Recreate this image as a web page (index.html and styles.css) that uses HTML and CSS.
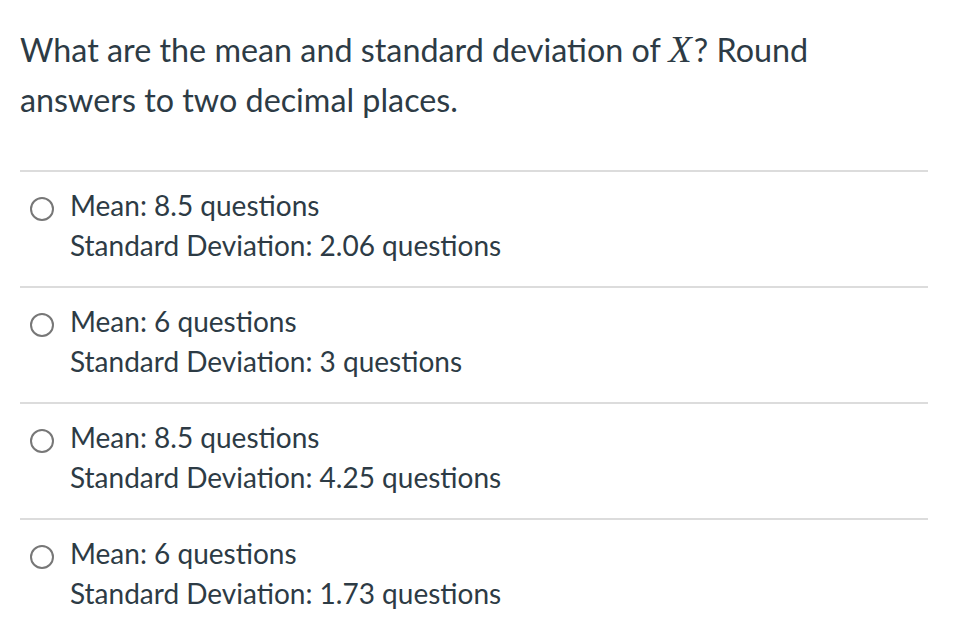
FILE: index.html
```html
<!DOCTYPE html>
<html>
<head>
<meta charset="utf-8">
<link rel="stylesheet" href="styles.css">
</head>
<body>
<div class="quiz">
  <div class="question">What are the mean and standard deviation of <span class="math">X</span>? Round answers to two decimal places.</div>
  <div class="answers">
    <div class="answer">
      <span class="radio"></span>
      <div class="label">Mean: 8.5 questions<br>Standard Deviation: 2.06 questions</div>
    </div>
    <div class="answer">
      <span class="radio"></span>
      <div class="label">Mean: 6 questions<br>Standard Deviation: 3 questions</div>
    </div>
    <div class="answer">
      <span class="radio"></span>
      <div class="label">Mean: 8.5 questions<br>Standard Deviation: 4.25 questions</div>
    </div>
    <div class="answer">
      <span class="radio"></span>
      <div class="label">Mean: 6 questions<br>Standard Deviation: 1.73 questions</div>
    </div>
  </div>
</div>
</body>
</html>
```
FILE: styles.css
```css
html, body {
  margin: 0;
  padding: 0;
  background: #fff;
}
body {
  font-family: Lato, "Liberation Sans", sans-serif;
  color: #2d3b45;
}
.quiz {
  padding: 25px 26px 0 20px;
}
.question {
  font-size: 32.3px;
  line-height: 50px;
  width: 850px;
}
.math {
  font-family: "Liberation Serif", "Times New Roman", serif;
  font-style: italic;
  font-size: 38px;
  line-height: 1;
  margin-right: 2px;
}
.answers {
  margin-top: 45px;
}
.answer {
  border-top: 2px solid #dcdcdc;
  display: flex;
  align-items: flex-start;
  padding: 13px 0 21px 0;
}
.radio {
  width: 20px;
  height: 20px;
  border: 2px solid #777;
  border-radius: 50%;
  margin: 12px 0 0 10px;
  flex: none;
}
.label {
  margin-left: 16px;
  font-size: 28px;
  line-height: 40px;
}
```
